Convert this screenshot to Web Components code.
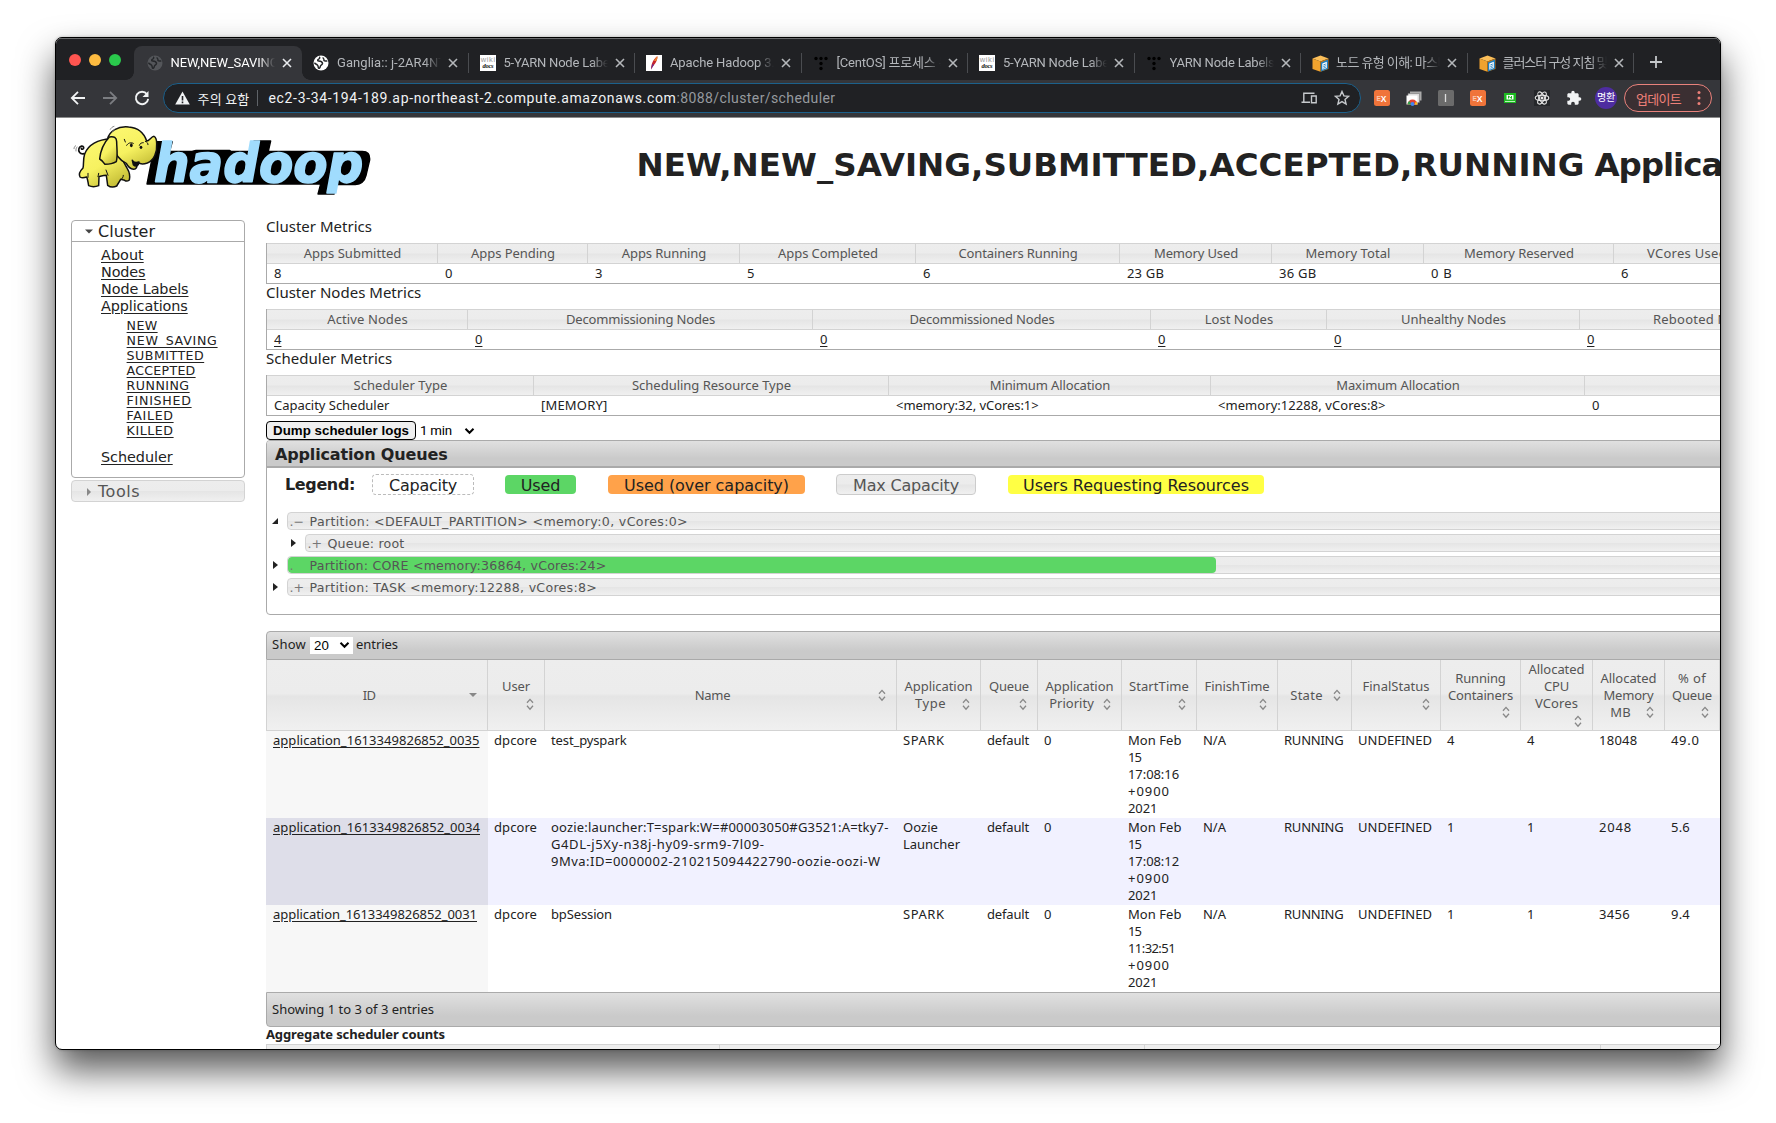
<!DOCTYPE html>
<html lang="ko">
<head>
<meta charset="utf-8">
<title>NEW,NEW_SAVING,SUBMITTED,ACCEPTED,RUNNING Applications</title>
<style>
html,body{margin:0;background:#fff;overflow:hidden}
body{width:1776px;height:1123px;padding:37px 0 0 55px;box-sizing:border-box}
</style>
</head>
<body>
<browser-window>
  <tab-strip slot="chrome"></tab-strip>
  <tool-bar slot="chrome"></tool-bar>
  <page-header></page-header>
  <page-body></page-body>
</browser-window>
<script>
const SANS = '"Noto Sans","Noto Sans CJK KR",sans-serif';
const VERD = '"DejaVu Sans",sans-serif';
const UI = 'Roboto,"Noto Sans CJK KR",sans-serif';
const BTN = 'linear-gradient(#ededed 0,#ececec 48%,#e5e5e5 52%,#f0f0f0 100%)';
const BAR = 'linear-gradient(#e0e0e0,#cacaca 70%,#cacaca)';
const esc = s => s.replace(/&/g,'&amp;').replace(/</g,'&lt;').replace(/>/g,'&gt;');
const fit = (t, w) => `<fit-text w="${w}">${esc(t)}</fit-text>`;

function define(name, css, html) {
  customElements.define(name, class extends HTMLElement {
    connectedCallback() {
      if (this.shadowRoot) return;
      const root = this.attachShadow({mode:'open'});
      root.innerHTML = `<style>*{box-sizing:border-box}${css}</style>` + (typeof html === 'function' ? html(this) : html);
    }
  });
}

/* Inline text tracked to a set advance width. */
customElements.define('fit-text', class extends HTMLElement {
  constructor() {
    super();
    this.attachShadow({mode:'open'}).innerHTML = '<style>:host{display:inline;white-space:nowrap}</style><slot></slot>';
  }
  connectedCallback() {
    queueMicrotask(() => {
      const w = parseFloat(this.getAttribute('w')), n = this.textContent.length;
      const now = this.getBoundingClientRect().width;
      if (w && now && n > 1) this.style.letterSpacing = ((w + 1 - now) / n).toFixed(3) + 'px';
    });
  }
});

define('sort-icon', ':host{display:inline-flex;width:16px;height:16px;align-items:center;justify-content:center}svg{display:block}',
  el => el.hasAttribute('down')
    ? '<svg width="16" height="16"><path d="M4 6h8l-4 4z" fill="#888"/></svg>'
    : '<svg width="16" height="16" fill="none" stroke="#888" stroke-width="1.3"><path d="M5 6.8 8 3.4l3 3.4M5 9.8l3 3.4 3-3.4"/></svg>');

/* ---------- browser chrome ---------- */
define('browser-window', `
:host{display:flex;flex-direction:column;width:1666px;height:1013px;border:1px solid #000;border-radius:7px;overflow:hidden;
 box-shadow:0 20px 36px rgba(0,0,0,.66),0 0 3px rgba(0,0,0,.25);background:#fff;box-sizing:border-box}
.page{flex:1;min-height:0;overflow:hidden}`,
 '<slot name="chrome"></slot><div class="page"><slot></slot></div>');

const globe = c => `<svg width="16" height="16" viewBox="0 0 16 16"><circle cx="8" cy="8" r="7.5" fill="${c}"/><path d="M6.2 1.8c1.2 1 .3 2-.9 2.5-1 .5-.8 1.7.4 1.8 2 .2 3.800.5 3.800 2.300 0 1.500-1.900 1.400-2.200 3 C7 12.900 6.300 13.600 5.600 13.200 5 12 5.400 10.700 4.200 9.800 3 9 1.800 8.800 1.600 7.600 M10.300 2.400c-.6 1.200 1 1.300.6 2.400-.4 1 1.100 1.500 3.400 1.200" stroke="#26282b" stroke-width="1.500" fill="none"/></svg>`;
const wiki = '<svg width="16" height="16" viewBox="0 0 16 16"><rect width="16" height="16" fill="#fff"/><text x=".7" y="7" font-family="Liberation Sans" font-size="7.500" fill="#999" textLength="14.500">wiki</text><text x="2.500" y="13" font-family="Liberation Serif" font-style="italic" font-weight="bold" font-size="6.500" fill="#111" textLength="11">docs</text></svg>';
const feather = '<svg width="16" height="16" viewBox="0 0 16 16"><rect width="16" height="16" fill="#fff"/><path d="M5 14.500C5 10 7 4 11.300 1.200 12 4 9.500 9 6.500 11.500z" fill="#c9252c"/><path d="M8 6c1-2.200 2-3.800 3.300-4.800.3 1.500-.2 3.200-1 4.800z" fill="#f0862e"/><path d="M5.200 14.500c.1-2 .6-4 1.300-5.700l1.500 1z" fill="#6d2a8a"/></svg>';
const tdots = '<svg width="16" height="16" viewBox="0 0 16 16" fill="#000"><circle cx="3" cy="3.500" r="1.700"/><circle cx="8" cy="3.500" r="1.700"/><circle cx="13" cy="3.500" r="1.700"/><circle cx="8" cy="8.500" r="1.700"/><circle cx="8" cy="13.500" r="1.700"/></svg>';
const cube = '<svg width="17" height="17" viewBox="0 0 17 17"><path d="M.5 3.500 8.500.5l8 3-8 3z" fill="#fbbf5a"/><path d="M.5 3.500v10.500l8 2.800V6.500z" fill="#f0a22e"/><path d="M8.500 6.500v10.300l8-2.800V3.500z" fill="#c77b16"/><path d="M9 7.500 16 4.500v9.300L9 16.500z" fill="#1f7fc0"/><path d="M10.300 8.500 14.800 6.700v6.200l-4.500 1.800z" fill="#fff"/><path d="M11.300 10l2.500-1M11.300 11.700l2.500-1M11.300 13.300l2.500-1" stroke="#1f7fc0" stroke-width=".9"/></svg>';

define('browser-tab', `
:host{display:flex;align-items:center;width:166.500px;height:34px;flex:none;position:relative;font:13px/18px ${UI};color:#b4b7bb;box-sizing:border-box;padding-left:11px}
:host([active]){background:#35363a;border-radius:8px 8px 0 0;color:#fff;width:168.500px;margin-left:-2px;padding-left:13px}
:host([active])::before,:host([active])::after{content:"";position:absolute;bottom:0;width:8px;height:8px}
:host([active])::before{left:-8px;background:radial-gradient(circle at 0 0,transparent 7.5px,#35363a 8px)}
:host([active])::after{right:-8px;background:radial-gradient(circle at 100% 0,transparent 7.5px,#35363a 8px)}
:host([active]) svg.x{stroke:#e8eaed}
.ic{width:17px;height:17px;display:flex}
.t{width:104px;margin-left:7px;overflow:hidden;white-space:nowrap;-webkit-mask-image:linear-gradient(90deg,#000 84%,transparent 100%);mask-image:linear-gradient(90deg,#000 84%,transparent 100%)}
svg.x{margin-left:7px;stroke:#b4b7ba;stroke-width:1.6;fill:none;flex:none}
i{position:absolute;right:0;top:7px;width:1px;height:20px;background:#4a4c50}`,
 el => {
  const ic = {dim:globe('#54565a'),globe:globe('#fff'),wiki,feather,tdots,cube}[el.getAttribute('icon')];
  return `<span class="ic">${ic}</span><span class="t"><slot></slot></span><svg class="x" width="10" height="10"><path d="M1 1l8 8M9 1l-8 8"/></svg>${el.hasAttribute('nosep')?'':'<i></i>'}`;
 });

define('tab-strip', `
:host{display:flex;height:42px;flex:none;background:#202124;border-top:1px solid #6a6b6d;box-sizing:border-box}
.lights{display:flex;gap:8px;width:79.500px;padding:14.500px 0 0 13px;flex:none}
.lights b{width:12px;height:12px;border-radius:50%;flex:none}
.tabs{display:flex;margin-top:7px}
.plus{margin:16px 0 0 15px}`,
`<div class="lights"><b style="background:#fe5550"></b><b style="background:#fdbb40"></b><b style="background:#2ac94c"></b></div>
<div class="tabs">
<browser-tab active nosep icon="dim">${fit('NEW,NEW_SAVING',107)}</browser-tab>
<browser-tab icon="globe">${fit('Ganglia:: j-2AR4NT',108)}</browser-tab>
<browser-tab icon="wiki">${fit('5-YARN Node Label',108)}</browser-tab>
<browser-tab icon="feather">${fit('Apache Hadoop 3.2',111)}</browser-tab>
<browser-tab icon="tdots">${fit('[CentOS] 프로세스 목',113)}</browser-tab>
<browser-tab icon="wiki">${fit('5-YARN Node Label',108)}</browser-tab>
<browser-tab icon="tdots">${fit('YARN Node Labels',104)}</browser-tab>
<browser-tab icon="cube">${fit('노드 유형 이해: 마스터',112)}</browser-tab>
<browser-tab icon="cube">${fit('클러스터 구성 지침 및',104)}</browser-tab>
</div>
<svg class="plus" width="14" height="14" stroke="#c4c7ca" stroke-width="1.800"><path d="M7 1v12M1 7h12"/></svg>`);

const ex = `<svg width="16" height="16"><rect width="16" height="16" rx="2.500" fill="#f0743a"/><text x="2.500" y="11" font-family="Liberation Sans" font-weight="bold" font-size="6.500" fill="#fbc9b0">E</text><text x="6.800" y="11.500" font-family="Liberation Sans" font-weight="bold" font-size="8.500" fill="#fff">X</text></svg>`;
define('tool-bar', `
:host{display:flex;align-items:center;height:38px;flex:none;background:#35363a;border-bottom:1px solid #8b8c8c;box-sizing:border-box;font-family:${UI};padding-bottom:1px}
svg{display:block;flex:none}
.nav{display:flex;gap:16px;padding-left:14px;width:107px}
.omni{display:flex;align-items:center;width:1198px;height:30px;border:1.500px solid #1c618c;border-radius:15px;background:#202124;padding:0 10px 0 10.500px;font-size:14px;color:#f1f3f4}
.omni .warn{font-size:13px;margin-left:8px}
.omni i{width:1px;height:16px;background:#5f6368;margin:0 11px 0 7px}
.omni .path{color:#969a9f}
.omni .sp{flex:1}
.ext{display:flex;align-items:center;gap:16px;margin-left:13px}
.av{width:22px;height:22px;border-radius:50%;background:#4e2ca0;color:#fff;font-size:10px;line-height:22px;text-align:center;margin-left:-3px}
.upd{display:flex;align-items:center;height:28px;width:88px;border:1.500px solid #e9827c;border-radius:15px;background:#3b2f32;color:#ef8079;font-size:13px;margin-left:7px;padding:0 10px 0 11px;justify-content:space-between}`,
`<div class="nav">
<svg width="16" height="16" fill="none" stroke="#f1f3f4" stroke-width="1.800"><path d="M15 8H2M8 1.800 1.800 8 8 14.200"/></svg>
<svg width="16" height="16" fill="none" stroke="#7b7d81" stroke-width="1.800"><path d="M1 8h13M8 1.800 14.200 8 8 14.200"/></svg>
<svg width="16" height="16"><path d="M13 4.200A6.200 6.200 0 1 0 14.200 8.800" fill="none" stroke="#f1f3f4" stroke-width="1.900"/><path d="M14.500 1v6h-6z" fill="#f1f3f4"/></svg></div>
<div class="omni"><svg width="15" height="14"><path d="M7.500 .5 14.800 13.500H.2z" fill="#f1f3f4"/><path d="M7.500 5v4.500M7.500 10.500v1.700" stroke="#202124" stroke-width="1.600"/></svg>
<span class="warn">${fit('주의 요함',51)}</span><i></i><span>${fit('ec2-3-34-194-189.ap-northeast-2.compute.amazonaws.com',407)}</span><span class="path">${fit(':8088/cluster/scheduler',158)}</span><span class="sp"></span>
<svg width="16" height="14" fill="none" stroke="#c6c9cc" stroke-width="1.400" style="margin-right:17px"><path d="M13.500 2.200H2.800v8.300M.5 11.300h8.500M10.500 5h4.700v6.700h-4.700z"/></svg>
<svg width="16" height="16" fill="none" stroke="#c6c9cc" stroke-width="1.400"><path d="M8 1.500l1.900 4.400 4.700.4-3.600 3.100 1.100 4.700L8 11.600l-4.100 2.500L5 9.400 1.400 6.300l4.700-.4z"/></svg></div>
<div class="ext">${ex}
<svg width="16" height="16"><path d="M4 1.500h11.500v9H4z" fill="#aaa"/><path d="M2 3.500h11.500v9H2z" fill="#ddd" stroke="#777" stroke-width=".6"/><path d="M.5 5.500h11v9H.5z" fill="#fff"/><path d="M1.500 14.500a5 5 0 0 1 10 0z" fill="#e34133"/><path d="M1.500 14.500a5 5 0 0 1 1.800-3.700l2 3.700z" fill="#2fa350"/><path d="M8.500 14.500l1.500-3.300a5 5 0 0 1 1.500 3.300z" fill="#fbc116"/><circle cx="6.500" cy="14" r="1.900" fill="#4285f4"/></svg>
<svg width="16" height="16"><rect width="16" height="16" rx="1.500" fill="#6b6b6b"/><path d="M7.500 4v8" stroke="#ddd" stroke-width="1.300"/></svg>
${ex}
<svg width="16" height="16"><path d="M2 3h12v10H2z" fill="#1dbb22"/><path d="M4.500 5h7v4.500h-7z" fill="#fff"/><path d="M6.500 8.500V6l3 2.500V6" stroke="#1dbb22" fill="none"/><path d="M3 11.500h10" stroke="#b9f0ba" stroke-width="1.200"/></svg>
<svg width="16" height="16"><rect width="16" height="16" fill="#25272a"/><g fill="none" stroke="#e8e8e8" stroke-width="1.100"><ellipse cx="8" cy="8" rx="6.800" ry="2.700"/><ellipse cx="8" cy="8" rx="6.800" ry="2.700" transform="rotate(60 8 8)"/><ellipse cx="8" cy="8" rx="6.800" ry="2.700" transform="rotate(120 8 8)"/></g><circle cx="8" cy="8" r="1.500" fill="#e8e8e8"/></svg>
<svg width="16" height="16" viewBox="0 0 24 24"><path fill="#f1f3f4" d="M20.500 11H19V7c0-1.100-.9-2-2-2h-4V3.500a2.500 2.500 0 0 0-5 0V5H4c-1.100 0-2 .9-2 2v3.800h1.500c1.500 0 2.700 1.200 2.700 2.700S5 16.200 3.500 16.200H2V20c0 1.100.9 2 2 2h3.800v-1.500c0-1.500 1.200-2.700 2.700-2.700s2.700 1.200 2.700 2.700V22H17c1.100 0 2-.9 2-2v-4h1.500a2.500 2.500 0 0 0 0-5z"/></svg>
<span class="av">${fit('명환',17)}</span></div>
<div class="upd">${fit('업데이트',44)}<svg width="4" height="16" fill="#ef8079"><circle cx="2" cy="2.500" r="1.500"/><circle cx="2" cy="8" r="1.500"/><circle cx="2" cy="13.500" r="1.500"/></svg></div>`);

/* ---------- page header ---------- */
define('hadoop-logo', ':host{display:block;width:310px;height:82px}svg{display:block}text{font:italic bold 160px "DejaVu Sans",sans-serif}',
`<svg width="310" height="82" viewBox="0 0 930 246">
<defs><linearGradient id="y" x1="0" y1="0" x2=".6" y2="1"><stop offset="0" stop-color="#fdf873"/><stop offset=".6" stop-color="#f6f160"/><stop offset="1" stop-color="#c9c23a"/></linearGradient></defs>
<g aria-hidden="true"><path d="M262 71h51l-8 29h67l12-3h100l5 3h61l8-31h50l-7 31h282q24 0 22 26l-11 47q-6 25-32 27h-58l-6 28h-48l8-30H237z" fill="#000" stroke="#000" stroke-width="4" stroke-linejoin="round"/></g>
<text x="258" y="191" textLength="628" lengthAdjust="spacingAndGlyphs" fill="#a0dcfd" stroke="#a0dcfd" stroke-width="5" stroke-linejoin="round">hadoop</text>
<g stroke="#111" stroke-width="4.500" stroke-linejoin="round" stroke-linecap="round">
<path d="M48 107C36 110 30 100 33 91c3-8 12-9 14-3 1 6-7 8-7 3" fill="none" stroke-width="5"/>
<path d="M128 62C90 64 60 80 50 108c-6 18-2 34-5 42-8 8-14 18-9 27 6 4 14 2 20 0 4 8 4 18 6 26 9 4 20 4 30 0l1-27c8-2 14-4 22-4l4 30c8 6 19 6 27 2l12-20 12 3c4 3 10 2 14-1 3-12 0-24-6-34z" fill="url(#y)"/>
<path d="M118 64C124 38 150 24 182 27c28 2 46 18 54 42 8 0 14-14 22-14 7 3 8 14 8 22 2 26-8 50-28 58-12 4-22 3-28-1l-5 4c4 8 0 16-8 16-12-2-18-10-22-18-18-8-34-28-40-52z" fill="url(#y)"/>
<path d="M124 57c14-3 22 2 22 14 0 18 4 40-1 60-10 6-24 8-34 8-4-6-8-12-16-16 2-20 12-48 29-66z" fill="url(#y)"/>
<path d="M193 127c4 6 12 8 20 5-1 12-10 16-17 8z" fill="#111"/>
<path d="M176 82c4-7 12-10 20-6M214 82c2-6 6-8 12-8M232 70c6 2 8 6 8 10M172 72l-3-8M60 178v-12M90 176l2-10M120 172l-6-16M158 186c4-4 8-8 8-14" fill="none" stroke-width="3"/>
<ellipse cx="190" cy="82" rx="4" ry="6" fill="#111" stroke="none"/><ellipse cx="219" cy="88" rx="4" ry="5" fill="#111" stroke="none"/>
<path d="M18 92c0-4 2-7 5-9M24 99c-1-5 1-9 3-12M127 34c2-4 6-8 11-9M133 42c2-3 4-5 7-7" fill="none" stroke="#777" stroke-width="2.500"/></g></svg>`);

define('page-header', `:host{display:flex;height:100px;padding-left:12px;width:1900px;box-sizing:border-box}
h1{margin:27px 0 0 258.500px;font:bold 32.500px/40px ${VERD};color:#222;white-space:nowrap;display:flex;gap:10px}`,
`<hadoop-logo></hadoop-logo><h1>${fit('NEW,NEW_SAVING,SUBMITTED,ACCEPTED,RUNNING',947)}<span>${fit('Applications',213)}</span></h1>`);

/* ---------- sidebar ---------- */
const L = (t,w) => `<a>${fit(t,w)}</a>`;
define('side-nav', `
:host{display:block;width:174px;margin:2px 0 0 15px;font-family:${VERD};color:#222;flex:none}
.box{border:1px solid #aaa;border-radius:4px;height:258px}
h3{margin:0;font:16px/20px ${VERD};height:21px;border-bottom:1px solid #aaa;display:flex;align-items:center;padding:1px 0 0 9px}
h3 svg,.tools svg{margin-right:1px;flex:none}
a{display:block;text-decoration:underline;text-underline-offset:2px}
.l{padding:5px 0 0 29px;font-size:14.400px;line-height:17px}
.s{margin:3px 0 11px 25.600px;font-size:12.600px;line-height:15px}
.tools{margin-top:2px;height:22px;border:1px solid #d3d3d3;border-radius:4px;background:${BTN};color:#555;font-size:16px;line-height:20px;display:flex;align-items:center;padding:1px 0 0 9px}`,
`<div class="box"><h3><svg width="16" height="16"><path d="M4 5.500h8l-4 4z" fill="#454545"/></svg>${fit('Cluster',56)}</h3>
<div class="l">${L('About',41.7)}${L('Nodes',43.5)}${L('Node Labels',86.5)}${L('Applications',85.7)}
<div class="s">${L('NEW',30)}${L('NEW_SAVING',90)}${L('SUBMITTED',76.6)}${L('ACCEPTED',68)}${L('RUNNING',62)}${L('FINISHED',64)}${L('FAILED',46)}${L('KILLED',46)}</div>
${L('Scheduler',70.7)}</div></div>
<div class="tools"><svg width="16" height="16"><path d="M6 4v8l4-4z" fill="#888"/></svg>${fit('Tools',41)}</div>`);

/* ---------- metrics ---------- */
const METRICS = {
 cluster:{t:['Cluster Metrics',105],c:[171,150,152,176,204,152,152,190,146],
  h:[['Apps Submitted',96.5],['Apps Pending',83],['Apps Running',83.4],['Apps Completed',98.9],['Containers Running',118],['Memory Used',83],['Memory Total',84],['Memory Reserved',109],['VCores Used',79]],
  v:[['8'],['0'],['3'],['5'],['6'],['23 GB',36],['36 GB',36.5],['0 B',20.6],['6']]},
 nodes:{t:['Cluster Nodes Metrics',154.3],link:1,c:[201,345,338,176,253,251],
  h:[['Active Nodes',79.5],['Decommissioning Nodes',148],['Decommissioned Nodes',144],['Lost Nodes',67.4],['Unhealthy Nodes',104],['Rebooted Nodes',104]],
  v:[['4'],['0'],['0'],['0'],['0'],['0']]},
 sched:{t:['Scheduler Metrics',125.3],c:[267,355,322,374,491],
  h:[['Scheduler Type',93],['Scheduling Resource Type',158],['Minimum Allocation',119.4],['Maximum Allocation',122.5],['Maximum Cluster Application Priority',221]],
  v:[['Capacity Scheduler',114.3],['[MEMORY]',65.5],['<memory:32, vCores:1>',141.6],['<memory:12288, vCores:8>',166.5],['0']]}
};
define('metrics-table', `
:host{display:block;height:66px;color:#222;font:13px/19px ${SANS}}
.t{height:25px;font-size:15px;line-height:16px}
.g{display:grid;width:max-content;border-left:1px solid #aaa}
.h{height:21px;border:1px solid #d3d3d3;border-left:0;background:${BTN};color:#555;text-align:center;padding-left:1px}
.v{height:20px;padding-left:7px;border-bottom:1px solid #aaa}
.link .v{text-decoration:underline;text-underline-offset:2px}`,
 el => { const m = METRICS[el.getAttribute('kind')];
  return `<div class="t">${fit(...m.t)}</div><div class="g ${m.link?'link':''}" style="grid-template-columns:${m.c.join('px ')}px">${m.h.map(a=>`<div class="h">${fit(...a)}</div>`).join('')}${m.v.map(a=>`<div class="v">${fit(a[0],a[1]||0)}</div>`).join('')}</div>`; });

/* ---------- queues ---------- */
define('queue-row', `
:host{display:flex;align-items:center;height:18px;margin-bottom:4px}
.a{width:19px;padding-left:3px;flex:none}
.a svg{display:block}
.b{flex:1;height:18px;border:1px solid #d3d3d3;border-radius:4px;background:${BTN};color:#555;font:12.600px/17px ${VERD};padding-left:1.500px;display:flex;overflow:hidden}
:host([used]) .b{padding:0;border-color:#d3d3d3}
:host([used]) .f{width:928px;height:16px;background:#5cd665;border-radius:4px;padding-left:1.500px;display:flex}
.f{display:flex}.m{width:20px;flex:none;color:#777}`,
 el => `<span class="a"><svg width="10" height="10">${el.hasAttribute('open')?'<path d="M1 8h6V2z" fill="#222"/>':'<path d="M2 1v8l5-4z" fill="#222"/>'}</svg></span><div class="b"><div class="f"><span class="m">${el.getAttribute('mark')}</span><slot></slot></div></div>`);

define('app-queues', `
:host{display:block;width:1700px;height:175px;border:1px solid #aaa;border-radius:4px;box-sizing:border-box;color:#222;font:16px/20px ${VERD}}
.hd{height:27px;background:${BAR};border-bottom:2px solid #aaa;font-weight:bold;line-height:28px;padding-left:8px;border-radius:3px 3px 0 0}
.lg{display:flex;align-items:center;height:33px;padding-left:18px}
.lg b{width:87px;padding-top:1px}
.k{height:19px;line-height:21px;border-radius:4px;text-align:center;flex:none;white-space:nowrap}
.tree{padding:11px 0 0 1px}
queue-row.sub{padding-left:18px}`,
`<div class="hd">${fit('Application Queues',171.500)}</div>
<div class="lg"><b>${fit('Legend:',69)}</b>
<span class="k" style="width:102px;height:21px;border:1px dashed #bbb">${fit('Capacity',67)}</span>
<span class="k" style="width:71px;margin-left:31px;background:#5cd665">${fit('Used',38.500)}</span>
<span class="k" style="width:197px;margin-left:32px;background:#ffa24a">${fit('Used (over capacity)',164)}</span>
<span class="k" style="width:140px;margin-left:31px;height:21px;border:1px solid #ccc;background:${BTN};color:#555">${fit('Max Capacity',105)}</span>
<span class="k" style="width:256px;margin-left:32px;background:#ffff44">${fit('Users Requesting Resources',225)}</span></div>
<div class="tree">
<queue-row open mark=".−">${fit('Partition: <DEFAULT_PARTITION> <memory:0, vCores:0>',377.500)}</queue-row>
<queue-row class="sub" mark=".+">${fit('Queue: root',76)}</queue-row>
<queue-row used mark=".">${fit('Partition: CORE <memory:36864, vCores:24>',296)}</queue-row>
<queue-row mark=".+">${fit('Partition: TASK <memory:12288, vCores:8>',286.500)}</queue-row></div>`);

/* ---------- applications ---------- */
const COLS = [221,57,352,84,57,84,75,81,74,89,80,72,72,55];
const HEAD = [[['ID',11.5],'in','down'],[['User',27],'own'],[['Name',34.4],'in'],[['Application',67],['Type',30],'in'],[['Queue',39],'own'],[['Application',67],['Priority',43.6],'in'],
 [['StartTime',59],'own'],[['FinishTime',64],'own'],[['State',31.5],'in'],[['FinalStatus',66],'own'],[['Running',49.4],['Containers',64],'own'],
 [['Allocated',55],['CPU',24],['VCores',42],'own'],[['Allocated',55],['Memory',49],['MB',19.5],'in'],[['% of',27],['Queue',39],'own']];
const when = (t,w) => [['Mon Feb',52.500],['15',12],[t,w],['+0900',41],['2021',28.500]];
const row = (id,w,name,type,t,tw,c,m,p) => [[[id,w]],[['dpcore',42]],name,type,[['default',41]],[['0']],when(t,tw),[['N/A',22]],[['RUNNING',58.5]],[['UNDEFINED',73]],[[c]],[[c]],[m],[p]];
const ROWS = [
 row('application_1613349826852_0035',205.5,[['test_pyspark',74.5]],[['SPARK',40.5]],'17:08:16',50,'4',['18048',37.5],['49.0',27.5]),
 row('application_1613349826852_0034',206,[['oozie:launcher:T=spark:W=#00003050#G3521:A=tky7-',336.5],['G4DL-j5Xy-n38j-hy09-srm9-7l09-',212.5],['9Mva:ID=0000002-210215094422790-oozie-oozi-W',328.5]],[['Oozie',34],['Launcher',56]],'17:08:12',50,'1',['2048',32],['5.6',18]),
 row('application_1613349826852_0031',203,[['bpSession',60]],[['SPARK',40.5]],'11:32:51',46,'1',['3456',30],['9.4',18])];
define('apps-table', `
:host{display:block;width:1500px;margin-top:16px;color:#222;font:13px/17px ${SANS}}
.bar{display:flex;align-items:center;height:29px;border:1px solid #aaa;border-radius:4px 4px 0 0;background:${BAR};padding:0 0 2px 5px}
.sel{display:flex;align-items:center;justify-content:space-between;width:43px;height:17px;background:#fff;color:#000;margin:1px 3px 0 4px;padding:0 3px 0 4px;font:13.300px/17px "Liberation Sans",sans-serif}
.g{display:grid;grid-template-columns:${COLS.join('px ')}px;width:max-content;border-left:1px solid #d3d3d3}
.th{height:71px;border-right:1px solid #d3d3d3;border-bottom:1px solid #d3d3d3;background:${BTN};color:#555;display:flex;flex-direction:column;justify-content:center;text-align:center}
.th .last{display:flex;align-items:center;padding:0 6px}.th .last span{flex:1}
.th .own{display:flex;justify-content:flex-end;padding-right:6px;height:17px;align-items:center}
.td{height:87px;padding:1px 0 0 6px;white-space:nowrap}
.td.first{background:#f7f7f7;text-decoration:underline;text-underline-offset:2px;margin-left:-1px;padding-left:7px}
.even{background:#f1f1ff}.td.first.even{background:#dedee9}
.foot{height:35px;border:1px solid #aaa;border-radius:0 0 4px 4px;background:${BAR};padding-left:5px;line-height:32px}`,
 () => `<div class="bar">${fit('Show',33)}<span class="sel">20<svg width="11" height="8" fill="none" stroke="#000" stroke-width="2"><path d="M1.500 1.800l4 4 4-4"/></svg></span>${fit('entries',41)}</div>
<div class="g">${HEAD.map(h => { const k = h.findIndex(x => typeof x === 'string'), ls = h.slice(0,k), own = h[k]==='own', ic = `<sort-icon ${h[k+1]||''}></sort-icon>`;
  return `<div class="th">${ls.map((l,i)=> !own && i===ls.length-1 ? `<div class="last"><span>${fit(...l)}</span>${ic}</div>` : `<div>${fit(...l)}</div>`).join('')}${own?`<div class="own">${ic}</div>`:''}</div>`; }).join('')}
${ROWS.map((r,i)=>r.map((c,j)=>`<div class="td ${j?'':'first'} ${i%2?'even':''}">${c.map(l=>`<div>${fit(l[0],l[1]||0)}</div>`).join('')}</div>`).join('')).join('')}</div>
<div class="foot">${fit('Showing 1 to 3 of 3 entries',161)}</div>`);

define('scheduler-counts', `:host{display:block;color:#222;font:bold 13px/15px ${SANS}}
.g{display:flex;margin-top:2px;height:20px}.g i{border:1px solid #d3d3d3;border-left:0;background:#ededed}.g i:first-child{border-left:1px solid #d3d3d3}`,
`${fit('Aggregate scheduler counts',178)}<div class="g"><i style="width:454px"></i><i style="width:425px"></i><i style="width:456px"></i><i style="width:300px"></i></div>`);

define('log-controls', `:host{display:flex;align-items:center;height:24px;padding-top:5px;box-sizing:border-box}
.b{width:150px;height:19px;border:1px solid #000;border-radius:4px;background:#efefef;font:bold 13.300px/18px "Liberation Sans",sans-serif;text-align:center;color:#000}
.s{font:13.300px/19px ${UI};color:#000;margin:0 12px 0 4px}`,
`<div class="b">${fit('Dump scheduler logs',135)}</div><span class="s">${fit('1 min',31)}</span><svg width="11" height="8" fill="none" stroke="#000" stroke-width="2"><path d="M1.500 1.800l4 4 4-4"/></svg>`);

define('page-body', ':host{display:flex;align-items:flex-start;width:2100px}.main{margin-left:21px;width:1800px;flex:none}',
`<side-nav></side-nav><div class="main">
<metrics-table kind="cluster"></metrics-table><metrics-table kind="nodes"></metrics-table><metrics-table kind="sched"></metrics-table>
<log-controls></log-controls><app-queues></app-queues><apps-table></apps-table><scheduler-counts></scheduler-counts></div>`);
</script>
</body>
</html>
